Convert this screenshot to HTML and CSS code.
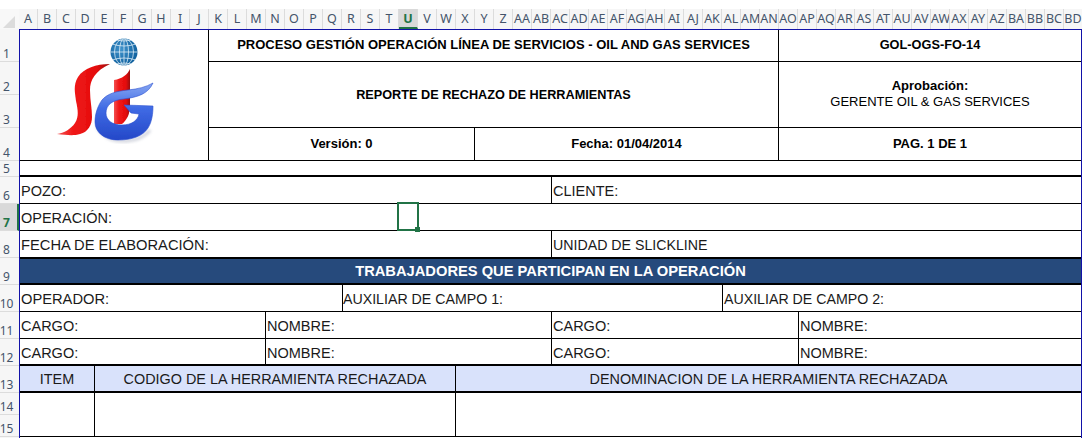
FILE: index.html
```html
<!DOCTYPE html>
<html lang="es">
<head>
<meta charset="utf-8">
<title>Reporte de rechazo de herramientas</title>
<link rel="stylesheet" href="styles.css">
</head>
<body>
<div class="colbar">
  <div class="corner"><svg width="19" height="20" viewBox="0 0 19 20"><polygon points="15,7 15,19 3,19" fill="#dcdcdc"/></svg></div>
  <div class="cols"><span>A</span><span>B</span><span>C</span><span>D</span><span>E</span><span>F</span><span>G</span><span>H</span><span>I</span><span>J</span><span>K</span><span>L</span><span>M</span><span>N</span><span>O</span><span>P</span><span>Q</span><span>R</span><span>S</span><span>T</span><span class="on">U</span><span>V</span><span>W</span><span>X</span><span>Y</span><span>Z</span><span>AA</span><span>AB</span><span>AC</span><span>AD</span><span>AE</span><span>AF</span><span>AG</span><span>AH</span><span>AI</span><span>AJ</span><span>AK</span><span>AL</span><span>AM</span><span>AN</span><span>AO</span><span>AP</span><span>AQ</span><span>AR</span><span>AS</span><span>AT</span><span>AU</span><span>AV</span><span>AW</span><span>AX</span><span>AY</span><span>AZ</span><span>BA</span><span>BB</span><span>BC</span><span>BD</span></div>
</div>
<div class="body">
  <div class="rowbar">
    <span class="r1">1</span><span class="r2">2</span><span class="r3">3</span><span class="r4">4</span><span class="r5">5</span><span class="r6">6</span><span class="r6 on">7</span><span class="r6">8</span><span class="r6">9</span><span class="r6">10</span><span class="r6">11</span><span class="r6">12</span><span class="r6">13</span><span class="r14">14</span><span class="r15">15</span>
  </div>
  <div class="sheet">
    <div class="head">
      <div class="logo">
        <svg width="188" height="130" viewBox="20 30 188 130">
          <defs>
            <radialGradient id="globe" cx="0.4" cy="0.4" r="0.7"><stop offset="0" stop-color="#3f93cc"/><stop offset="1" stop-color="#0a5a98"/></radialGradient>
            <linearGradient id="red" x1="0" y1="0" x2="1" y2="0"><stop offset="0" stop-color="#f25050"/><stop offset="0.3" stop-color="#f01818"/><stop offset="0.75" stop-color="#e40c0c"/><stop offset="1" stop-color="#9a0808"/></linearGradient>
            <linearGradient id="blue" x1="0" y1="0" x2="0" y2="1"><stop offset="0" stop-color="#86a6f2"/><stop offset="0.45" stop-color="#3f6ae4"/><stop offset="1" stop-color="#2448c8"/></linearGradient>
            <clipPath id="gc"><circle cx="124" cy="52" r="13.500"/></clipPath>
            <filter id="soft" x="-10%" y="-10%" width="120%" height="120%"><feGaussianBlur stdDeviation="0.35"/></filter>
            <filter id="shade" x="-20%" y="-20%" width="140%" height="140%"><feGaussianBlur stdDeviation="1.500"/></filter>
          </defs>
          <circle cx="124" cy="52" r="13.500" fill="url(#globe)"/>
          <g clip-path="url(#gc)" fill="none" stroke="#dcecf6" stroke-width="0.8">
            <ellipse cx="124" cy="52" rx="4.500" ry="13.500"/><ellipse cx="124" cy="52" rx="9.500" ry="13.500"/>
            <path d="M124 38v28M110 52h28M112 44q12 4 24 0M112 60q12-4 24 0M115 40q9 2 18 0M115 64q9-2 18 0"/>
          </g>
          <path d="M97 126C101 136 112 141 122 141C132 141 143 139 150 130" fill="none" stroke="#9aa0b4" stroke-width="3" opacity="0.45" filter="url(#shade)"/>
          <g filter="url(#soft)">
            <path d="M110 64C96 64 84 68 78 77C73 85 75 93 76 101C78 110 79 117 75 123C71 129 64 133 57 134C66 135 74 136 80 134C88 132 92 125 92 117C92 108 90 100 90 90C90 80 95 71 110 64Z" fill="url(#red)"/>
            <path d="M130 69C128 74 122 79 114 80L114 124L122 124C127 120 130 114 130 105Z" fill="url(#red)"/>
            <path d="M153 83C146 87 138 89 128 90C116 91 107 94 102 100C97 107 95 115 95 122C95 132 104 140 118 140C132 140 143 136 148 128C152 122 153 113 153 106L124 105L131 113L139 114C138 120 132 125 122 125C112 125 106 120 106 113C106 105 112 100 124 99C138 97 148 94 153 83Z" fill="url(#blue)" stroke="#2a4fd0" stroke-width="0.6"/>
          </g>
        </svg>
      </div>
      <div class="htitle b l1">PROCESO GESTIÓN OPERACIÓN LÍNEA DE SERVICIOS - OIL AND GAS SERVICES</div>
      <div class="hcode b l1">GOL-OGS-FO-14</div>
      <div class="hsub b">REPORTE DE RECHAZO DE HERRAMIENTAS</div>
      <div class="happ"><p class="app-text"><b>Aprobación:</b><br>GERENTE OIL &amp; GAS SERVICES</p></div>
      <div class="hver b l1">Versión: 0</div>
      <div class="hfec b l1">Fecha: 01/04/2014</div>
      <div class="hpag b l1">PAG. 1 DE 1</div>
    </div>
    <div class="gap"></div>
    <div class="row g-a"><div class="cell">POZO:</div><div class="cell">CLIENTE:</div></div>
    <div class="row g-full"><div class="cell">OPERACIÓN:</div><div class="select"></div></div>
    <div class="row g-a"><div class="cell wide">FECHA DE ELABORACIÓN:</div><div class="cell narrow">UNIDAD DE SLICKLINE</div></div>
    <div class="band">TRABAJADORES QUE PARTICIPAN EN LA OPERACIÓN</div>
    <div class="row g-b"><div class="cell wide">OPERADOR:</div><div class="cell narrow tight">AUXILIAR DE CAMPO 1:</div><div class="cell narrow">AUXILIAR DE CAMPO 2:</div></div>
    <div class="row g-c"><div class="cell">CARGO:</div><div class="cell">NOMBRE:</div><div class="cell">CARGO:</div><div class="cell">NOMBRE:</div></div>
    <div class="row g-c last"><div class="cell">CARGO:</div><div class="cell">NOMBRE:</div><div class="cell">CARGO:</div><div class="cell">NOMBRE:</div></div>
    <div class="row g-d th"><div class="cell">ITEM</div><div class="cell">CODIGO DE LA HERRAMIENTA RECHAZADA</div><div class="cell">DENOMINACION DE LA HERRAMIENTA RECHAZADA</div></div>
    <div class="row g-d empty"><div class="cell"></div><div class="cell"></div><div class="cell"></div></div>
  </div>
</div>
</body>
</html>
```
FILE: styles.css
```css
* { box-sizing: border-box; }
html, body { margin: 0; padding: 0; background: #fff; overflow: hidden; }
body { width: 1082px; height: 438px; font-family: "Liberation Sans", Arial, sans-serif; color: #000; }

.colbar { display: flex; height: 29px; padding-top: 9px; }
.corner { width: 19px; height: 20px; background: #f8f8f8; }
.cols { display: flex; flex: 1; background: #f6f6f6; }
.cols span { flex: 0 0 19px; height: 20px; font-family: "Noto Sans", sans-serif; font-size: 12.5px; line-height: 19px; text-align: center; color: #44546a; border-right: 1px solid #dcdcdc; white-space: nowrap; overflow: hidden; }
.cols span.on { background: #d9d9d9; color: #217346; font-weight: bold; border-bottom: 2px solid #217346; }

.body { display: flex; }
.rowbar { width: 19px; flex: none; display: flex; flex-direction: column; background: #f6f6f6; }
.rowbar span { font-family: "Noto Sans", sans-serif; font-size: 12px; color: #44546a; display: flex; align-items: flex-end; justify-content: center; padding-right: 6px; border-bottom: 1px solid #dcdcdc; line-height: 14px; }
.rowbar .on { background: #d9d9d9; color: #217346; font-weight: bold; border-right: 2px solid #217346; padding-right: 4px; }
.r1, .r2, .r3, .r4 { height: 33px; }
.r5 { height: 16px; }
.r6 { height: 27px; }
.r14, .r15 { height: 22px; }

.sheet { width: 1063px; height: 409px; flex: none; border: solid #1212a8; border-width: 1px 1px 0 1px; overflow: hidden; }

.head { display: grid; grid-template-columns: 189px 266px 304px 1fr; grid-template-rows: 32px 66px 33px; font-size: 13px; }
.head > div { display: flex; align-items: center; justify-content: center; text-align: center; }
.b { font-weight: bold; }
.l1 { padding-bottom: 2px; }
.logo { grid-row: 1 / 4; grid-column: 1; border-right: 1px solid #000; border-bottom: 1px solid #000; }
.logo svg { display: block; flex: none; }
.htitle { grid-column: 2 / 4; border-bottom: 1px solid #000; border-right: 1px solid #000; }
.hcode { grid-column: 4; border-bottom: 1px solid #000; font-size: 12.75px; }
.hsub { grid-column: 2 / 4; border-bottom: 1px solid #000; border-right: 1px solid #000; font-size: 12.7px; }
.happ { grid-column: 4; border-bottom: 1px solid #000; padding-bottom: 1px; }
.app-text { margin: 0; line-height: 16px; }
.hver, .hfec { border-right: 1px solid #000; border-bottom: 1px solid #000; }
.hpag { border-bottom: 1px solid #000; }

.gap { height: 16px; border-bottom: 2px solid #000; }
.row { display: grid; height: 27px; border-bottom: 1px solid #000; font-size: 14.5px; position: relative; }
.g-a { grid-template-columns: 532px 1fr; }
.g-full { grid-template-columns: 1fr; }
.g-b { grid-template-columns: 323px 380px 1fr; }
.g-c { grid-template-columns: 246px 286px 247px 1fr; }
.g-d { grid-template-columns: 75px 361px 1fr; }
.cell { padding: 1px 0 0 1px; line-height: 26px; white-space: nowrap; border-right: 1px solid #000; color: #1a1a1a; }
.cell:last-child, .g-full .cell { border-right: 0; }
.wide { font-size: 14.7px; }
.narrow { font-size: 14.2px; }
.tight { padding-left: 0; }
.band { margin-top: -1px; height: 28px; background: #264a7c; color: #fff; font-weight: bold; font-size: 14.7px; text-align: center; line-height: 24px; border-top: 2px solid #000; border-bottom: 2px solid #000; }
.last { border-bottom: 2px solid #000; }
.th { background: #d9e2fb; border-bottom: 2px solid #000; font-size: 14.4px; }
.th .cell { text-align: center; padding: 0; }
.empty { height: 44px; }
.select { position: absolute; left: 377px; top: -2px; width: 22px; height: 29px; border: 2px solid #217346; }
.select::after { content: ""; position: absolute; right: -3px; bottom: -3px; width: 5px; height: 5px; background: #217346; }
```
